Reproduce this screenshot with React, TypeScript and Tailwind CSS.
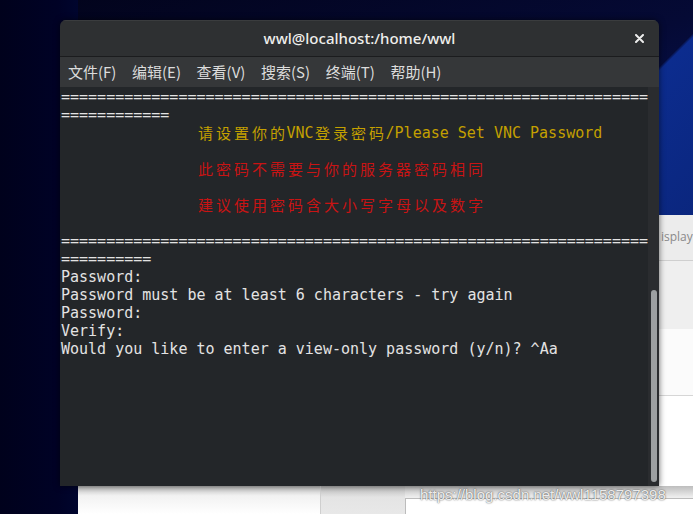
import React from "react";

const MONO = "font-['DejaVu_Sans_Mono',monospace]";

function isWide(c: string) {
  return /[\u2e80-\u9fff\uff00-\uffef\u3000-\u303f]/.test(c);
}

function TermLine({ text, color = "text-[#e3e3e3]" }: { text: string; color?: string }) {
  const parts: React.ReactNode[] = [];
  let buf = "";
  let k = 0;
  for (const ch of Array.from(text)) {
    if (isWide(ch)) {
      if (buf) {
        parts.push(<span key={k++}>{buf}</span>);
        buf = "";
      }
      parts.push(
        <span
          key={k++}
          className="inline-block w-[18px] text-center align-top font-['Noto_Sans_CJK_SC',sans-serif] text-[15px] leading-[18px]"
        >
          {ch}
        </span>
      );
    } else buf += ch;
  }
  if (buf) parts.push(<span key={k++}>{buf}</span>);
  return <div className={`h-[18px] whitespace-pre ${color}`}>{parts}</div>;
}

export default function App() {
  const eq = (n: number) => "=".repeat(n);
  const ind = " ".repeat(15);
  const menus = ["文件(F)", "编辑(E)", "查看(V)", "搜索(S)", "终端(T)", "帮助(H)"];
  return (
    <div className="relative w-[693px] h-[514px] overflow-hidden bg-[linear-gradient(160deg,#02031a_0%,#050a35_35%,#081a6a_70%,#0b2a86_100%)]">
      {/* desktop decorations */}
      <div className="absolute left-[560px] top-0 w-[200px] h-[215px] bg-[linear-gradient(135deg,transparent_40%,#0c2c8e_41%,#0a2478_100%)]" />
      <div className="absolute left-0 top-0 w-[78px] h-[514px] bg-[linear-gradient(90deg,#00011c_0%,#000226_75%,#00052e_100%)]" />
      {/* right white panel */}
      <div className="absolute left-[659px] top-[215px] w-[34px] h-[299px] bg-[#f3f3f3] flex flex-col">
        <div className="h-[46px] border-b border-[#cfcfcf] bg-[#ececec] pl-[2px] pt-[13px] text-[12px] leading-[18px] text-[#8a8a8a] font-['Open_Sans',sans-serif] whitespace-nowrap overflow-hidden">
          isplay
        </div>
        <div className="h-[68px] bg-[#efefef]" />
        <div className="h-[67px] border-b border-[#d6d6d6] bg-[#fbfbfb]" />
        <div className="flex-1 border-b border-[#d6d6d6] bg-white" />
      </div>
      {/* bottom panels */}
      <div className="absolute left-[78px] top-[486px] w-[242px] h-[28px] bg-[linear-gradient(180deg,#bdbdbd_0%,#f2f2f2_35%,#ffffff_100%)]" />
      <div className="absolute left-[320px] top-[486px] w-[85px] h-[28px] bg-[linear-gradient(180deg,#b8b8b8_0%,#e4e4e4_40%,#e8e8e8_100%)] border-l border-[#cfcfcf]" />
      <div className="absolute left-[405px] top-[486px] w-[288px] h-[28px] bg-[linear-gradient(180deg,#bdbdbd_0%,#eeeeee_40%,#efefef_100%)]" />
      <div className="absolute left-[405px] top-[498px] w-[288px] h-[16px] bg-white border-t border-l border-[#bcbcbc]" />

      {/* terminal window */}
      <div className="absolute left-[60px] top-[20px] w-[599px] h-[466px] flex flex-col rounded-t-[6px] overflow-hidden shadow-[0_0_6px_rgba(0,0,0,0.6)]">
        <div className="relative h-[37px] shrink-0 bg-[#2e3032] border-b border-[#1b1c1e] border-t border-t-[#3a3c3e] flex items-center justify-center">
          <span className="font-['Noto_Sans',sans-serif] text-[15px] font-medium text-[#eeeeec] -mt-[1px]">
            wwl@localhost:/home/wwl
          </span>
          <svg
            className="absolute right-[15px] top-[13px]"
            width="9"
            height="9"
            viewBox="0 0 9 9"
          >
            <path d="M1 1L8 8M8 1L1 8" stroke="#ececec" strokeWidth="2" strokeLinecap="round" />
          </svg>
        </div>
        <div className="h-[30px] shrink-0 bg-[#353739] flex items-center pl-[8px] gap-[15.6px] font-['Noto_Sans_CJK_SC',sans-serif] text-[15px] text-[#dcdcdc]">
          {menus.map((m) => (
            <span key={m} className="leading-[20px]">
              {m}
            </span>
          ))}
        </div>
        <div className="flex-1 flex bg-[#232629]">
          <div className={`flex-1 pl-[1px] pt-[1px] ${MONO} text-[15px] leading-[18px] text-[#e3e3e3]`}>
            <TermLine text={eq(65)} />
            <TermLine text={eq(12)} />
            <TermLine text={ind + "请设置你的VNC登录密码/Please Set VNC Password"} color="text-[#c4a000]" />
            <TermLine text="" />
            <TermLine text={ind + "此密码不需要与你的服务器密码相同"} color="text-[#c81414]" />
            <TermLine text="" />
            <TermLine text={ind + "建议使用密码含大小写字母以及数字"} color="text-[#c81414]" />
            <TermLine text="" />
            <TermLine text={eq(65)} />
            <TermLine text={eq(10)} />
            <TermLine text="Password:" />
            <TermLine text="Password must be at least 6 characters - try again" />
            <TermLine text="Password:" />
            <TermLine text="Verify:" />
            <TermLine text="Would you like to enter a view-only password (y/n)? ^Aa" />
          </div>
          <div className="w-[13px] shrink-0 bg-[#2a2c2f] flex flex-col pt-[203px] pb-[4px] pl-[3px]">
            <div className="w-[6px] flex-1 rounded-full bg-[#9c9fa1]" />
          </div>
        </div>
      </div>

      {/* watermark */}
      <div className="absolute left-[420px] top-[485px] font-['Liberation_Sans',Arial,sans-serif] text-[15px] leading-[20px] text-[rgba(255,255,255,0.9)] [text-shadow:0_0_2px_rgba(0,0,0,0.55),0_0_1px_rgba(0,0,0,0.4)] whitespace-nowrap">
        https://blog.csdn.net/wwl1158797398
      </div>
    </div>
  );
}
